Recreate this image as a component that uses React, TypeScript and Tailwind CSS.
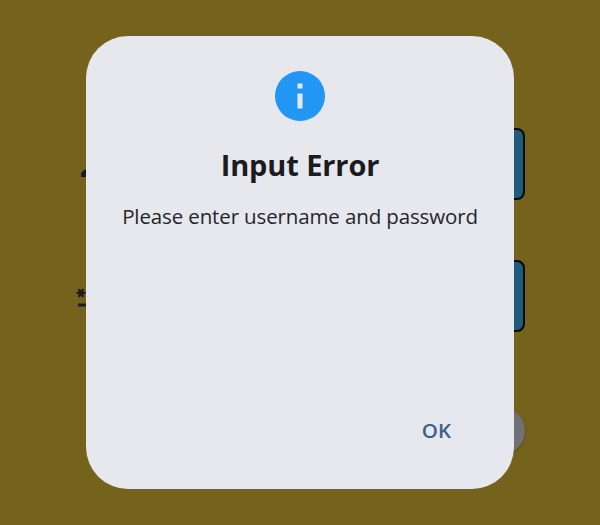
import React from "react";

const font = "font-['Open_Sans','Noto_Sans',sans-serif]";

function PersonIcon() {
  return (
    <svg width="42" height="42" viewBox="0 0 24 24" fill="#1b1c20" className="-ml-px" aria-hidden="true">
      <path d="M12 12c2.210 0 4-1.790 4-4s-1.790-4-4-4-4 1.790-4 4 1.790 4 4 4zm0 2c-3.200 0-8 1.340-8 4v1.400h16V18c0-2.660-4.800-4-8-4z" />
    </svg>
  );
}

function PasswordIcon() {
  return (
    <svg width="36" height="36" viewBox="0 0 24 24" fill="#1b1c20" aria-hidden="true">
      <path d="M2 17h20v2H2v-2zm1.150-4.050L4 11.470l.85 1.480 1.300-.75-.85-1.480H7v-1.500H5.300l.85-1.470L4.850 7 4 8.470 3.150 7l-1.300.75.850 1.470H1v1.500h1.700l-.850 1.480 1.300.750zm6.700-.750 1.300.750.850-1.480.850 1.480 1.300-.750-.850-1.480H15v-1.500h-1.700l.850-1.470-1.300-.750L12 8.470 11.150 7l-1.300.750.850 1.470H9v1.500h1.700l-.850 1.480z" />
    </svg>
  );
}

function Field({ icon }: { icon: React.ReactNode }) {
  return (
    <div className="flex h-[72px] items-center gap-5">
      {icon}
      <div className="h-full flex-1 rounded-[8px] border-2 border-[#08090a] bg-[#1f5c7a]" />
    </div>
  );
}

export default function App() {
  return (
    <div className={`relative h-[525px] w-[600px] overflow-hidden bg-[#75621c] ${font}`}>
      <div className="flex h-full flex-col pr-[75px] pl-[75px] pt-[128px]">
        <Field icon={<PersonIcon />} />
        <div className="mt-[60px]">
          <Field icon={<PasswordIcon />} />
        </div>
        <div className="mt-[75px] ml-auto h-[48px] w-[220px] rounded-full bg-[#707075] shadow-[0_1px_2px_rgba(0,0,0,0.3)]" />
      </div>

      <div className="absolute inset-0 flex items-start justify-center pt-9">
        <div
          role="dialog"
          className="flex h-[453px] w-[428px] flex-col items-center rounded-[42px] bg-[#e6e8ed] pt-[35px]"
        >
          <svg width="50" height="50" viewBox="0 0 50 50" aria-hidden="true">
            <circle cx="25" cy="25" r="25" fill="#2196f3" />
            <path d="M22.500 12.500h5v5h-5zM22.500 22.500h5v15h-5z" fill="#e6e8ed" />
          </svg>
          <h1 className="mt-[24px] text-[29px] leading-[40px] font-bold tracking-[-0.12px] whitespace-nowrap text-[#1a1c22]">
            Input Error
          </h1>
          <p className="mt-[16px] text-[20.5px] leading-[30px] tracking-[-0.13px] whitespace-nowrap text-[#24262b]">
            Please enter username and password
          </p>
          <button className="mt-auto mr-[63px] mb-[44px] self-end text-[20.5px] leading-[30px] font-semibold text-[#37618e]">
            OK
          </button>
        </div>
      </div>
    </div>
  );
}
